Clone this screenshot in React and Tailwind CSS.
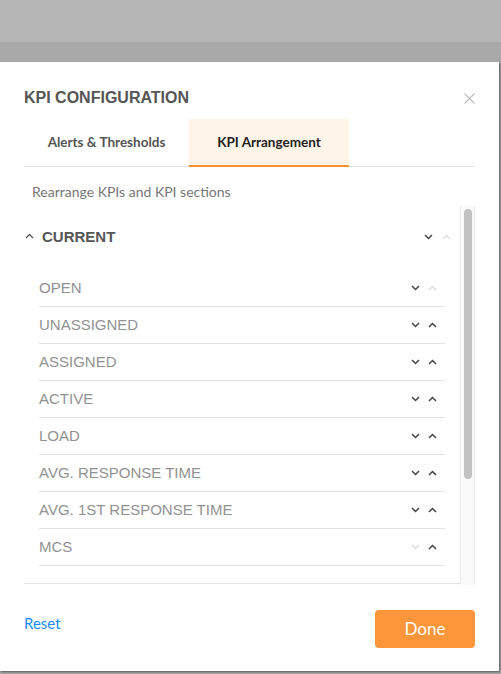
import React from 'react';

const kpis = [
  { name: 'OPEN', up: false, down: true },
  { name: 'UNASSIGNED', up: true, down: true },
  { name: 'ASSIGNED', up: true, down: true },
  { name: 'ACTIVE', up: true, down: true },
  { name: 'LOAD', up: true, down: true },
  { name: 'AVG. RESPONSE TIME', up: true, down: true },
  { name: 'AVG. 1ST RESPONSE TIME', up: true, down: true },
  { name: 'MCS', up: true, down: false },
];

const Chevron = ({ dir = 'down', enabled = true }) => (
  <svg width="9" height="6" viewBox="0 0 9 6" fill="none" className="block">
    <path
      d={dir === 'down' ? 'M1 1 L4.5 4.5 L8 1' : 'M1 5 L4.5 1.5 L8 5'}
      stroke={enabled ? '#444444' : '#dddddd'}
      strokeWidth="1.5"
    />
  </svg>
);

const App = () => {
  return (
    <div className="w-[501px] h-[674px] bg-[#a9a9a9] overflow-hidden">
      <div className="h-[42px] bg-[#b5b5b5]" />
      <div className="h-[20px]" />
      <div className="w-[499px] h-[609px] bg-white shadow-[1px_1px_2px_rgba(0,0,0,0.5)] flex flex-col px-6">
        {/* header */}
        <div className="h-[57px] pt-[26px] flex items-start justify-between">
          <h1 className="text-[16px] leading-5 font-bold text-[#555] font-['Liberation_Sans',Arial,sans-serif]">
            KPI CONFIGURATION
          </h1>
          <svg width="11" height="11" viewBox="0 0 11 11" className="mt-[5px]">
            <path d="M0.5 0.5 L10.5 10.5 M10.5 0.5 L0.5 10.5" stroke="#bdbdbd" strokeWidth="1.1" />
          </svg>
        </div>

        {/* tabs */}
        <div className="flex h-[48px] border-b border-[#e2e2e2] font-['Lato',sans-serif] text-[13.5px]">
          <div className="w-[165px] flex items-center justify-center font-bold text-[#555]">
            Alerts &amp; Thresholds
          </div>
          <div className="w-[160px] flex items-center justify-center font-bold text-[#222] bg-[#fef4e8] border-b-2 border-[#f7922f] mb-[-1px]">
            KPI Arrangement
          </div>
        </div>

        <p className="pl-2 mt-[15px] text-[14px] leading-5 text-[#777] font-['Lato',sans-serif]">
          Rearrange KPIs and KPI sections
        </p>

        {/* scroll area */}
        <div className="mt-[4px] h-[379px] flex overflow-hidden font-['Liberation_Sans',Arial,sans-serif]">
          <div className="flex-1 overflow-hidden">
            <div className="border-b border-[#e4e4e4] pb-[17px]">
              <div className="h-[62px] flex items-center justify-between pr-[9px]">
                <div className="flex items-center">
                  <svg width="9" height="6" viewBox="0 0 9 6" fill="none" className="ml-[1px] mb-[3px]">
                    <path d="M1 5 L4.5 1.5 L8 5" stroke="#555" strokeWidth="1.3" />
                  </svg>
                  <span className="ml-[8px] text-[15px] font-bold text-[#555]">CURRENT</span>
                </div>
                <div className="flex items-center gap-[9px]">
                  <Chevron dir="down" />
                  <Chevron dir="up" enabled={false} />
                </div>
              </div>
              <div className="mt-[2px] px-[15px]">
                {kpis.map((k) => (
                  <div
                    key={k.name}
                    className="h-[37px] border-b border-[#e2e2e2] flex items-center justify-between pr-[8px]"
                  >
                    <span className="text-[15px] text-[#929292]">{k.name}</span>
                    <div className="flex items-center gap-[8px]">
                      <Chevron dir="down" enabled={k.down} />
                      <Chevron dir="up" enabled={k.up} />
                    </div>
                  </div>
                ))}
              </div>
            </div>
          </div>
          <div className="w-[15px] bg-[#fafafa] border-l border-r border-[#ececec] pt-[3px] pl-[3px]">
            <div className="w-[8px] h-[270px] rounded-full bg-[#c2c2c2]" />
          </div>
        </div>

        {/* footer */}
        <div className="flex items-center justify-between mt-[25px] font-['Lato',sans-serif]">
          <button className="text-[15px] text-[#1a8cff] mt-[-12px]">Reset</button>
          <button className="w-[100px] h-[38px] rounded-[4px] bg-[#fd953b] text-white text-[17px]">
            Done
          </button>
        </div>
      </div>
    </div>
  );
};

export default App;
